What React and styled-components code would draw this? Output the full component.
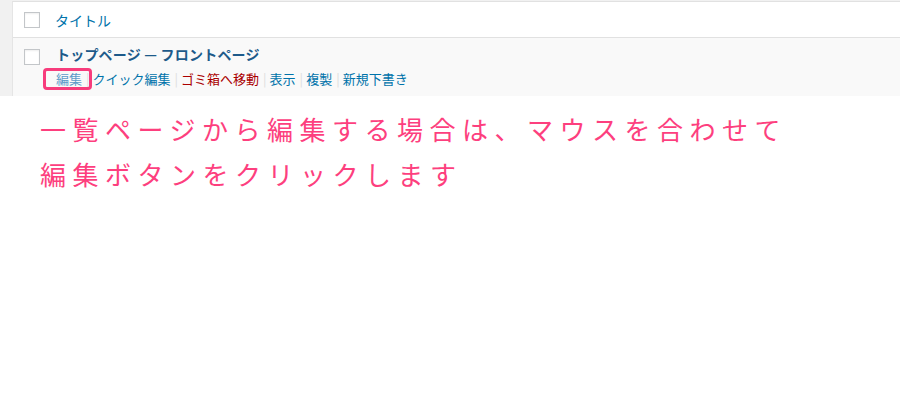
import { createGlobalStyle, styled } from "styled-components";

const GlobalStyle = createGlobalStyle`
  body {
    margin: 0;
    background: #fff;
    font-family: "Noto Sans CJK JP", "Noto Sans", sans-serif;
  }
`;

const AdminArea = styled.div`
  background: #f1f1f1;
  padding: 1px 0 0 12px;
`;

const ListTable = styled.div`
  border-top: 1px solid #e1e1e1;
  border-left: 1px solid #e5e5e5;
`;

const HeaderRow = styled.div`
  display: flex;
  align-items: center;
  height: 35px;
  padding-left: 11px;
  background: #fff;
  border-bottom: 1px solid #e1e1e1;
`;

const Checkbox = styled.span`
  display: block;
  flex: none;
  width: 14px;
  height: 14px;
  border: 1px solid #c3c6c9;
  background: #fff;
  box-shadow: inset 0 1px 2px rgba(0, 0, 0, 0.07);
`;

const ColumnTitle = styled.span`
  margin-left: 15px;
  font-size: 14px;
  color: #0073aa;
`;

const BodyRow = styled.div`
  display: flex;
  gap: 16px;
  height: 58px;
  padding: 11px 0 0 11px;
  box-sizing: border-box;
  background: #f9f9f9;
`;

const RowMain = styled.div`
  display: flex;
  flex-direction: column;
  margin-top: -5px;
`;

const RowTitle = styled.strong`
  font-size: 14px;
  font-weight: 700;
  line-height: 20px;
  letter-spacing: 0.2px;
  color: #1d5a8a;
`;

const RowActions = styled.div`
  position: relative;
  display: flex;
  align-items: center;
  margin-top: 5px;
  font-size: 13px;
  line-height: 20px;
`;

const Action = styled.span`
  color: ${(p) => (p.$danger ? "#a00" : p.$faded ? "#5e9bc9" : "#0073aa")};
`;

const Sep = styled.span`
  color: #ddd;
  margin: 0 3px 0 4px;
`;

const Highlight = styled.span`
  position: absolute;
  left: -13px;
  top: -1px;
  width: 43px;
  height: 16px;
  border: 3px solid #f73c7c;
  border-radius: 4px;
`;

const Note = styled.p`
  margin: 10px 0 0 40px;
  font-size: 26px;
  line-height: 45px;
  letter-spacing: 6.5px;
  color: #fd3f7e;
`;

export default function App() {
  const actions = [
    { label: "クイック編集" },
    { label: "ゴミ箱へ移動", danger: true },
    { label: "表示" },
    { label: "複製" },
    { label: "新規下書き" },
  ];

  return (
    <>
      <GlobalStyle />
      <AdminArea>
        <ListTable>
          <HeaderRow>
            <Checkbox />
            <ColumnTitle>タイトル</ColumnTitle>
          </HeaderRow>
          <BodyRow>
            <Checkbox />
            <RowMain>
              <RowTitle>トップページ — フロントページ</RowTitle>
              <RowActions>
                <Highlight />
                <Action $faded>編集</Action>
                {actions.map((a) => (
                  <span key={a.label}>
                    <Sep>|</Sep>
                    <Action $danger={a.danger}>{a.label}</Action>
                  </span>
                ))}
              </RowActions>
            </RowMain>
          </BodyRow>
        </ListTable>
      </AdminArea>
      <Note>
        一覧ページから編集する場合は、マウスを合わせて
        <br />
        編集ボタンをクリックします
      </Note>
    </>
  );
}
